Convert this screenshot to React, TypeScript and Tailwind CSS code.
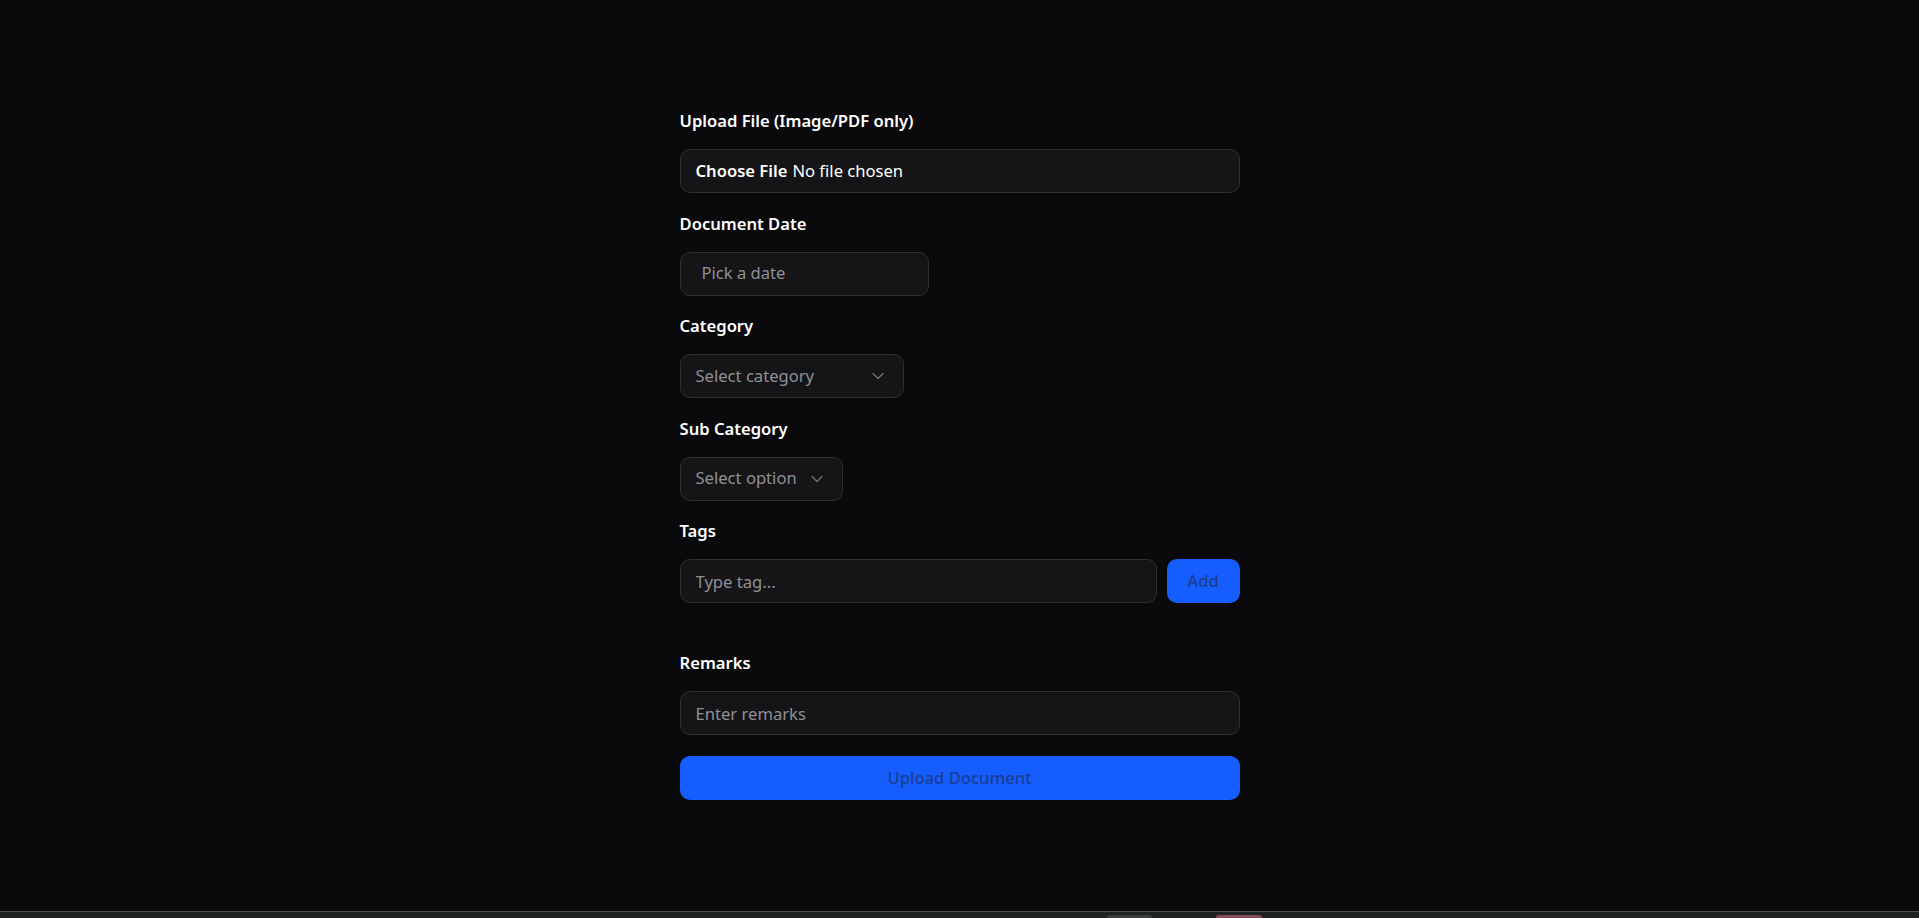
import { ChevronDown } from 'lucide-react';

const labelCls = 'block text-[16.6px] leading-[25px] font-semibold text-white';
const fieldCls = 'h-[44px] rounded-[10px] border border-[#2f2f33] bg-[#151517] text-[16.6px]';

export default function App() {
  return (
    <div className="min-h-screen flex flex-col bg-[#0a0a0c]" style={{ fontFamily: '"Noto Sans", "Open Sans", sans-serif' }}>
      <main className="flex-1 flex justify-center pt-[108px]">
        <form className="w-[560px] flex flex-col" onSubmit={e => e.preventDefault()}>
          <label className={labelCls}>Upload File (Image/PDF only)</label>
          <div className={`${fieldCls} mt-[16px] flex items-center px-[15px] text-white`}>
            <span className="font-semibold mr-[5px]">Choose File</span>
            <span>No file chosen</span>
          </div>

          <label className={`${labelCls} mt-[17.5px]`}>Document Date</label>
          <button type="button" className={`${fieldCls} mt-[16px] w-[249px] flex items-center pl-[21px] text-[#8f8f96]`}>
            Pick a date
          </button>

          <label className={`${labelCls} mt-[17.5px]`}>Category</label>
          <button type="button" className={`${fieldCls} mt-[16px] w-[224px] flex items-center justify-between px-[15px] text-[#8f8f96]`}>
            <span>Select category</span>
            <ChevronDown size={20} strokeWidth={1.75} className="text-[#6c6c72]" />
          </button>

          <label className={`${labelCls} mt-[17.5px]`}>Sub Category</label>
          <button type="button" className={`${fieldCls} mt-[16px] w-fit flex items-center gap-[10px] px-[15px] text-[#8f8f96]`}>
            <span>Select option</span>
            <ChevronDown size={20} strokeWidth={1.75} className="text-[#6c6c72]" />
          </button>

          <label className={`${labelCls} mt-[17.5px]`}>Tags</label>
          <div className="mt-[16px] flex gap-[10px]">
            <input
              placeholder="Type tag..."
              className={`${fieldCls} flex-1 px-[15px] text-white placeholder:text-[#8f8f96] outline-none`}
            />
            <button type="button" className="h-[44px] w-[73px] rounded-[10px] bg-[#155dfc] text-[16.6px] font-medium text-[#1b3d96]">
              Add
            </button>
          </div>

          <label className={`${labelCls} mt-[47px]`}>Remarks</label>
          <input
            placeholder="Enter remarks"
            className={`${fieldCls} mt-[16px] px-[15px] text-white placeholder:text-[#8f8f96] outline-none`}
          />

          <button type="submit" className="mt-[21px] h-[44px] rounded-[10px] bg-[#155dfc] text-[16.6px] font-medium text-[#1b3d96]">
            Upload Document
          </button>
        </form>
      </main>

      <div className="h-[7px] border-t border-[#4a4d4d] bg-[#1f2323] flex items-end">
        <div className="ml-[1107px] w-[45px] h-[3px] rounded-t-sm bg-[#3a3d3e]" />
        <div className="ml-[64px] w-[46px] h-[3px] rounded-t-sm bg-[#8a4a55]" />
      </div>
    </div>
  );
}
